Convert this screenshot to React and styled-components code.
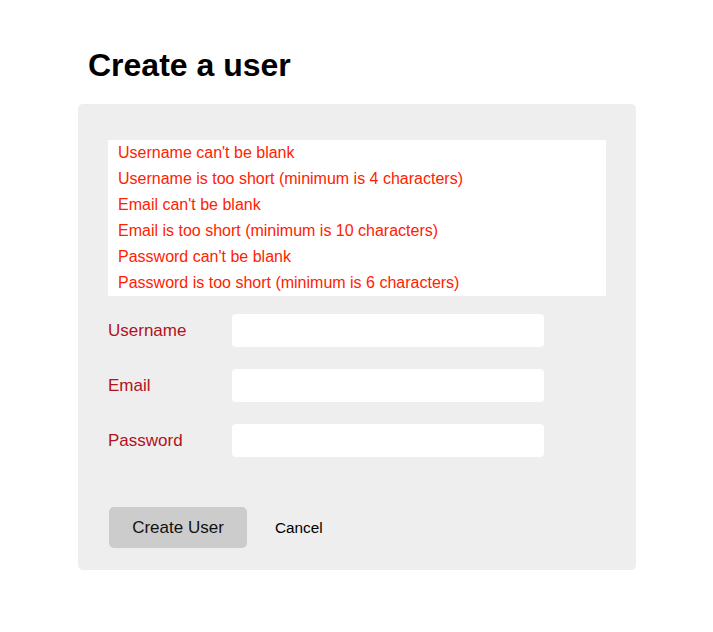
import React from 'react';
import styled, { createGlobalStyle } from 'styled-components';

const GlobalStyle = createGlobalStyle`
  body {
    margin: 0;
    background: #ffffff;
    font-family: "Liberation Sans", Arial, sans-serif;
  }
`;

const Page = styled.div`
  padding: 46px 0 0 78px;
  width: 558px;
`;

const Title = styled.h1`
  margin: 0 0 20px 10px;
  font-size: 32px;
  line-height: 38px;
  font-weight: bold;
  color: #000000;
`;

const Panel = styled.form`
  background: #eeeeee;
  border-radius: 5px;
  padding: 36px 30px 22px 30px;
`;

const ErrorList = styled.ul`
  list-style: none;
  margin: 0 0 18px 0;
  padding: 0 10px;
  background: #ffffff;
`;

const ErrorItem = styled.li`
  font-size: 16px;
  line-height: 26px;
  color: #ff2200;
`;

const Fields = styled.div`
  display: flex;
  flex-direction: column;
  gap: 22px;
  margin-bottom: 50px;
`;

const Field = styled.div`
  display: flex;
  align-items: center;
`;

const Label = styled.label`
  width: 124px;
  font-size: 17px;
  color: #b3111c;
`;

const Input = styled.input`
  width: 312px;
  height: 33px;
  box-sizing: border-box;
  border: none;
  border-radius: 4px;
  background: #ffffff;
  padding: 0 8px;
  font-size: 15px;
  outline: none;
`;

const Actions = styled.div`
  display: flex;
  align-items: center;
  gap: 28px;
  padding-left: 1px;
`;

const Button = styled.button`
  width: 138px;
  height: 41px;
  border: none;
  border-radius: 5px;
  background: #cccccc;
  color: #111111;
  font-family: inherit;
  font-size: 17px;
  cursor: pointer;
`;

const CancelLink = styled.a`
  font-size: 15.3px;
  color: #000000;
  text-decoration: none;
  cursor: pointer;
`;

const errors = [
  "Username can't be blank",
  'Username is too short (minimum is 4 characters)',
  "Email can't be blank",
  'Email is too short (minimum is 10 characters)',
  "Password can't be blank",
  'Password is too short (minimum is 6 characters)',
];

const fields = [
  { id: 'username', label: 'Username', type: 'text' },
  { id: 'email', label: 'Email', type: 'email' },
  { id: 'password', label: 'Password', type: 'password' },
];

const App = () => (
  <>
    <GlobalStyle />
    <Page>
      <Title>Create a user</Title>
      <Panel onSubmit={(e) => e.preventDefault()}>
        <ErrorList>
          {errors.map((err) => (
            <ErrorItem key={err}>{err}</ErrorItem>
          ))}
        </ErrorList>
        <Fields>
          {fields.map((f) => (
            <Field key={f.id}>
              <Label htmlFor={f.id}>{f.label}</Label>
              <Input id={f.id} type={f.type} />
            </Field>
          ))}
        </Fields>
        <Actions>
          <Button type="submit">Create User</Button>
          <CancelLink>Cancel</CancelLink>
        </Actions>
      </Panel>
    </Page>
  </>
);

export default App;
